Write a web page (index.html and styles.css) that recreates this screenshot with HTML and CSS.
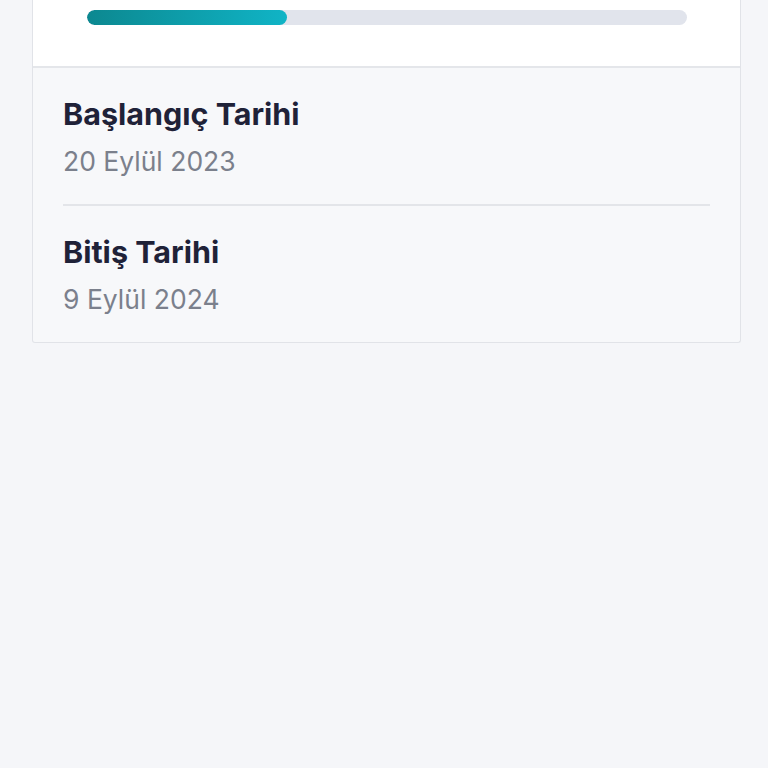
FILE: index.html
```html
<!DOCTYPE html>
<html lang="tr">

<head>
  <meta charset="UTF-8" />
  <meta name="viewport" content="width=device-width, initial-scale=1.0" />
  <title>Proje Tarihleri</title>
  <link rel="stylesheet" href="styles.css">
</head>

<body>
  <div class="card">
    <div class="progress-section">
      <div class="progress">
        <div class="progress-fill" style="width: 33.4%"></div>
      </div>
    </div>

    <div class="dates">
      <div class="date-row">
        <div class="date-label">Başlangıç Tarihi</div>
        <div class="date-value">20 Eylül 2023</div>
      </div>
      <div class="date-row">
        <div class="date-label">Bitiş Tarihi</div>
        <div class="date-value">9 Eylül 2024</div>
      </div>
    </div>
  </div>
</body>

</html>
```

FILE: styles.css
```css
body {
  font-family: Inter, "Noto Sans", sans-serif;
  margin: 0;
  padding: 0 27px 0 32px;
  background-color: #f5f6f9;
  min-height: 100vh;
}

.card {
  border: 1px solid #e1e3e8;
  border-top: none;
  border-radius: 0 0 3px 3px;
  background-color: #f7f8fa;
}

.progress-section {
  background-color: #ffffff;
  padding: 10px 53px 41px 54px;
  border-bottom: 2px solid #e4e6ea;
}

.progress {
  height: 15px;
  border-radius: 8px;
  background-color: #e1e4ec;
  overflow: hidden;
}

.progress-fill {
  height: 100%;
  border-radius: 8px;
  background: linear-gradient(90deg, #0c8890, #10b4c6);
}

.dates {
  padding: 0 30px;
}

.date-row {
  padding: 27px 0 25px;
}

.date-row + .date-row {
  border-top: 2px solid #e3e5e9;
}

.date-label {
  font-size: 30.5px;
  font-weight: 700;
  line-height: 38px;
  color: #1f2238;
}

.date-value {
  margin-top: 10px;
  font-size: 26.5px;
  line-height: 36px;
  color: #7b808c;
}
```
